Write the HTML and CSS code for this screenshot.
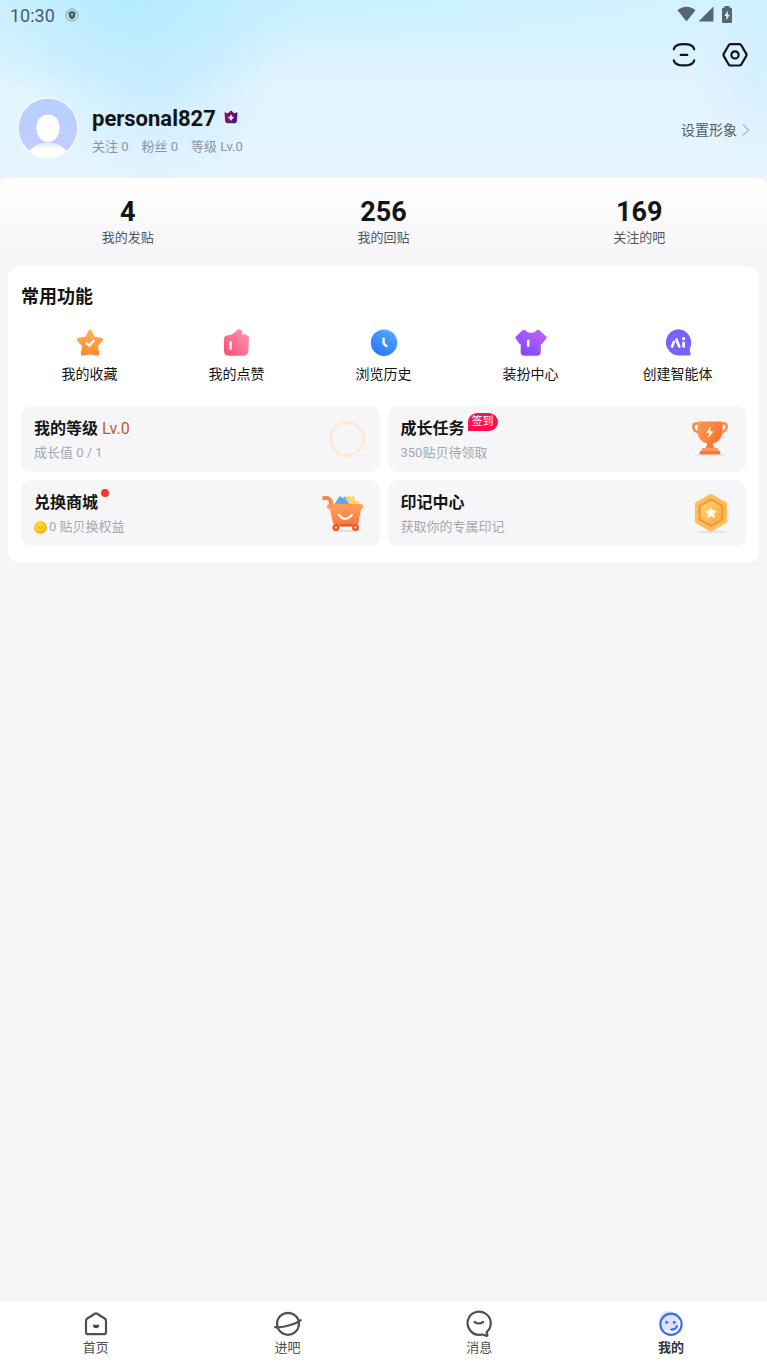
FILE: index.html
```html
<!DOCTYPE html>
<html lang="zh-CN">
<head>
  <meta charset="UTF-8" />
  <meta name="viewport" content="width=device-width, initial-scale=1.0" />
  <title>我的</title>
  <link rel="stylesheet" href="styles.css">
</head>
<body>
  <header class="hero">
    <div class="status-bar">
      <span class="clock">10:30</span>
      <svg width="14" height="14" viewBox="0 0 14 14">
        <circle cx="7" cy="7" r="6" fill="none" stroke="#8c9ea6" stroke-width="1" />
        <path d="M3.6 3.9 7 2.9l3.4 1v3C10.400 9 9 10.500 7 11.300 5 10.500 3.600 9 3.600 6.900z" fill="#4b5c63" />
        <path d="M5.500 5.500h3L7 8.500z" fill="#a9c4cd" />
      </svg>
      <div class="status-icons">
        <svg width="19" height="16" viewBox="0 0 19 16"><path d="M.5 4.300C5.500-.4 13.500-.4 18.500 4.300L9.500 15.500z" fill="#57666c" /></svg>
        <svg width="16" height="16" viewBox="0 0 16 16"><path d="M15.500.5v15H.5z" fill="#57666c" /></svg>
        <svg width="12" height="17" viewBox="0 0 12 17">
          <path d="M3.500 0h5v1.800H10q1 0 1 1V16q0 1-1 1H2q-1 0-1-1V2.800q0-1 1-1h1.500z" fill="#57666c" />
          <path d="M6.700 4.500 3.400 10h2v4.300L8.700 8.700h-2z" fill="#e2f4fd" />
        </svg>
      </div>
    </div>

    <div class="toolbar">
      <button class="icon-btn" aria-label="扫一扫">
        <svg width="28" height="28" viewBox="0 0 28 28" fill="none" stroke="#141414" stroke-width="2.200" stroke-linecap="round">
          <path d="M3.800 8.200C4.600 4.600 8 3.200 14 3.200s9.400 1.400 10.200 5M3.800 19.400c.8 3.600 4.200 5 10.200 5s9.400-1.400 10.200-5M10.700 13.900h6.600" />
        </svg>
      </button>
      <button class="icon-btn" aria-label="设置">
        <svg width="28" height="28" viewBox="0 0 28 28" fill="none" stroke="#141414" stroke-width="2.200" stroke-linejoin="round">
          <path d="M9.400 3.200h9.200q1.100 0 1.700 1l5 8.700q.6 1 0 2l-5 8.600q-.6 1-1.700 1H9.400q-1.100 0-1.700-1l-5-8.600q-.6-1 0-2l5-8.700q.6-1 1.700-1z" />
          <circle cx="14" cy="13.900" r="3.600" />
        </svg>
      </button>
    </div>

    <div class="profile">
      <svg class="avatar" width="62" height="62" viewBox="0 0 62 62">
        <defs>
          <linearGradient id="av" x1="0" y1="0" x2="0" y2="1"><stop offset="0" stop-color="#b6d1ff" /><stop offset="1" stop-color="#c5caff" /></linearGradient>
          <linearGradient id="bust" x1="0" y1="0" x2="0" y2="1"><stop offset="0" stop-color="#e2e7ff" /><stop offset=".4" stop-color="#fff" /></linearGradient>
          <clipPath id="avClip"><circle cx="31" cy="31" r="30" /></clipPath>
        </defs>
        <g clip-path="url(#avClip)">
          <circle cx="31" cy="31" r="30" fill="url(#av)" />
          <path d="M6 62C13 50 21 45.500 31 45.500S49 50 56 62z" fill="url(#bust)" />
          <path d="M31 17.500c7 0 11.500 5.500 11.500 13 0 8-4.500 14.500-11.500 14.500s-11.500-6.500-11.500-14.500c0-7.500 4.500-13 11.500-13z" fill="#fff" />
        </g>
        <circle cx="31" cy="31" r="30" fill="none" stroke="#f5faff" stroke-width="1.500" />
      </svg>
      <div class="profile-info">
        <h1 class="username">personal827
          <svg width="14" height="14" viewBox="0 0 14 14">
            <defs><linearGradient id="crown" x1="0" y1="0" x2="1" y2=".4"><stop offset="0" stop-color="#a3105e" /><stop offset=".5" stop-color="#7a1068" /><stop offset="1" stop-color="#3a12a5" /></linearGradient></defs>
            <path d="M.5 3q0-.8.800-.6L4 3.300 6.200 1Q7 .2 7.800 1L10 3.300l2.700-.9q.8-.2.800.6l-.7 8.200q-.2 2-2.200 2H3.400q-2 0-2.200-2z" fill="url(#crown)" />
            <path d="m7 4.300 1.200 2.200 2 1.200-2 1.200L7 11.100 5.800 8.900l-2-1.200 2-1.200z" fill="#fff0c0" />
          </svg>
        </h1>
        <div class="profile-meta"><span>关注 0</span><span>粉丝 0</span><span>等级 Lv.0</span></div>
      </div>
      <a class="avatar-link" href="#">设置形象
        <svg width="8" height="14" viewBox="0 0 8 14" fill="none" stroke="#b4bcc4" stroke-width="1.400"><path d="m1 1.500 5.500 5.500L1 12.500" /></svg>
      </a>
    </div>
  </header>

  <main>
    <section class="stats">
      <a class="stat" href="#"><b>4</b><span>我的发贴</span></a>
      <a class="stat" href="#"><b>256</b><span>我的回贴</span></a>
      <a class="stat" href="#"><b>169</b><span>关注的吧</span></a>
    </section>

    <section class="card">
      <h2 class="card-title">常用功能</h2>
      <div class="features">
        <a class="feature" href="#">
          <svg width="30" height="30" viewBox="0 0 30 30">
            <defs><linearGradient id="star" x1="0" y1="0" x2="0" y2="1"><stop offset="0" stop-color="#ffb054" /><stop offset="1" stop-color="#ff8a35" /></linearGradient></defs>
            <path d="m15 3.800 3.200 6.600 7.900 1.300-5.300 5.700 1.500 8.400L15 24.200l-7.300 1.600 1.500-8.400-5.300-5.700 7.900-1.300z" fill="url(#star)" stroke="url(#star)" stroke-width="4" stroke-linejoin="round" />
            <path d="m11.500 15.200 2.800 2.600 4.400-5" fill="none" stroke="#fff" stroke-width="2.200" stroke-linecap="round" stroke-linejoin="round" />
          </svg>
          <span>我的收藏</span>
        </a>
        <a class="feature" href="#">
          <svg width="30" height="30" viewBox="0 0 30 30">
            <defs><linearGradient id="like" x1="1" y1="0" x2="0" y2="1"><stop offset="0" stop-color="#ff9eae" /><stop offset="1" stop-color="#fb4a76" /></linearGradient></defs>
            <path d="M6 7.300c3.500-.2 5.500-1.500 8-4.300 2.800-3.200 6.600-1.500 6.300 2L20 6.500h2.500c3.500 0 4.700 1.900 4.500 4.700l-.6 11c-.3 3.700-2.100 5.500-5.500 5.500H7.500C4 27.700 2 26 2 22.500v-10c0-3.500 1-5 4-5.200z" fill="url(#like)" />
            <path d="M8.500 14.500v6" stroke="#fff" stroke-width="2.400" stroke-linecap="round" />
          </svg>
          <span>我的点赞</span>
        </a>
        <a class="feature" href="#">
          <svg width="30" height="30" viewBox="0 0 30 30">
            <defs><linearGradient id="hist" x1=".8" y1="0" x2=".3" y2="1"><stop offset="0" stop-color="#53a9ff" /><stop offset="1" stop-color="#2e76f5" /></linearGradient></defs>
            <circle cx="15" cy="14.700" r="13.200" fill="url(#hist)" />
            <path d="M14.600 10.600v4.800l2.800 2.700" fill="none" stroke="#fff" stroke-width="2.300" stroke-linecap="round" stroke-linejoin="round" />
          </svg>
          <span>浏览历史</span>
        </a>
        <a class="feature" href="#">
          <svg width="32" height="30" viewBox="0 0 32 30">
            <defs><linearGradient id="shirt" x1="1" y1="0" x2=".2" y2="1"><stop offset="0" stop-color="#c565ff" /><stop offset="1" stop-color="#7d49fb" /></linearGradient></defs>
            <path d="M7.200 2.400q1.800-1.300 3.300 0c3.200 3.100 7.800 3.100 11 0q1.500-1.300 3.300 0l6.300 6q1.100 1.200 0 2.400l-3.700 4.600q-.8 1-1.600.5v8.100q0 3.800-3.800 3.800H9.500q-3.800 0-3.800-3.800v-8.100q-.6.5-1.400-.5L.9 10.800q-1.100-1.200 0-2.400z" fill="url(#shirt)" />
            <path d="M13.200 12.800v5" stroke="#fff" stroke-width="2.400" stroke-linecap="round" />
          </svg>
          <span>装扮中心</span>
        </a>
        <a class="feature" href="#">
          <svg width="30" height="30" viewBox="0 0 30 30">
            <path d="M15 1.200a13.200 13.200 0 0 1 12.100 18.500c-.6 1.400-.6 2.500.4 5.500q.7 2.300-1.500 2.300H15A13.200 13.200 0 0 1 15 1.200z" fill="#7960ff" />
            <path d="M8.600 19.400 11.300 13M13 10.500l3.600 8.900M20.600 13.800v5.600" fill="none" stroke="#fff" stroke-width="2.600" />
            <circle cx="20.600" cy="10.600" r="1.600" fill="#fff" />
          </svg>
          <span>创建智能体</span>
        </a>
      </div>

      <div class="tiles">
        <a class="tile" href="#">
          <div>
            <h3>我的等级 <span class="level">Lv.0</span></h3>
            <p>成长值 0 / 1</p>
          </div>
          <svg width="40" height="44" viewBox="0 0 40 44"><circle cx="20" cy="22" r="16.500" fill="none" stroke="#fdeadb" stroke-width="3.500" /></svg>
        </a>
        <a class="tile" href="#">
          <div>
            <h3>成长任务<span class="badge">签到</span></h3>
            <p>350贴贝待领取</p>
          </div>
          <svg width="46" height="44" viewBox="0 0 46 44">
            <defs>
              <linearGradient id="cup" x1="0" y1="0" x2="1" y2=".5"><stop offset="0" stop-color="#ff9b5e" /><stop offset="1" stop-color="#fa742c" /></linearGradient>
            </defs>
            <ellipse cx="23" cy="38" rx="16" ry="1.500" fill="#e4e6ea" />
            <path d="M12 6.500H8.500C6.500 6.500 6 8.500 6.700 11.500c.7 2.500 2.800 3.600 6.300 3.600M34 6.500h3.500c2 0 2.500 2 1.800 5-.7 2.500-2.800 3.600-6.300 3.600" fill="none" stroke="#f9894c" stroke-width="2.600" />
            <path d="M20 23h6v5c0 2 1.500 3 4 4.500H16c2.500-1.500 4-2.500 4-4.500z" fill="#f9783a" />
            <path d="M10.500 6Q10.500 4.500 12 4.500h22q1.500 0 1.500 1.500v7.700C35.500 22 30 26.500 23 26.500S10.500 22 10.500 13.700z" fill="url(#cup)" />
            <rect x="14.500" y="31" width="17" height="4" rx="1.500" fill="#fc9a5b" />
            <rect x="12.500" y="34" width="21" height="3.600" rx="1.500" fill="#f47a3b" />
            <path d="m24 9.300-5 6.500h3.200l-1.200 5.500 5.800-7h-3.600z" fill="#fff6cf" />
          </svg>
        </a>
        <a class="tile" href="#">
          <div>
            <h3>兑换商城<span class="dot"></span></h3>
            <p>
              <svg width="13" height="13" viewBox="0 0 13 13">
                <circle cx="6.500" cy="6.500" r="6.300" fill="#ffad05" /><circle cx="6" cy="6" r="4.900" fill="#ffd42d" />
                <path d="M3.800 5.500Q6 9 8.500 5.500" fill="none" stroke="#f5a900" stroke-width="1.200" stroke-linecap="round" />
              </svg>
              0 贴贝换权益
            </p>
          </div>
          <svg width="46" height="44" viewBox="0 0 46 44">
            <defs><linearGradient id="cart" x1=".3" y1="0" x2=".6" y2="1"><stop offset="0" stop-color="#ffa057" /><stop offset="1" stop-color="#ff7438" /></linearGradient></defs>
            <ellipse cx="25" cy="39.800" rx="14" ry="1.300" fill="#dfe1e5" />
            <path d="m13.500 13 4.500-7q1-1.500 2.500 0l1.200 1.500 1.500-1.700q1.200-1 2 .5l3 6.700z" fill="#5ba9f8" />
            <path d="m24 7 3-2.500 3 2 3-1.500 1.200 5 4 .5-.5 3H29z" fill="#ffd75c" />
            <path d="M3 7h2.700q3 0 4 3.200l.5 4" fill="none" stroke="#f98949" stroke-width="4" stroke-linecap="round" />
            <path d="M8.500 16h32l-3 15.300q-.7 3-3.700 3H15.500q-3 0-3.700-3z" fill="url(#cart)" />
            <rect x="6" y="13" width="36" height="5" rx="2.500" fill="#ff9c5a" />
            <path d="M18.500 34.500h13" stroke="#df5420" stroke-width="2" />
            <path d="M18 24q6 7.500 13 0" fill="none" stroke="#fff" stroke-width="2.200" stroke-linecap="round" />
            <g fill="#fff" stroke="#e65d26" stroke-width="2.500"><circle cx="15" cy="36.500" r="2.300" /><circle cx="34.500" cy="36.500" r="2.300" /></g>
          </svg>
        </a>
        <a class="tile" href="#">
          <div>
            <h3>印记中心</h3>
            <p>获取你的专属印记</p>
          </div>
          <svg width="44" height="44" viewBox="0 0 44 44">
            <defs><linearGradient id="medal" x1="0" y1="0" x2="1" y2="1"><stop offset="0" stop-color="#ffd67b" /><stop offset="1" stop-color="#ffa344" /></linearGradient></defs>
            <ellipse cx="22" cy="40.800" rx="15" ry="1.500" fill="#e1e3e7" />
            <path d="m22 5 14 8v17.500l-14 8-14-8V13z" fill="#ffbd55" stroke="#ffbd55" stroke-width="4" stroke-linejoin="round" />
            <path d="m22 8.500 11.300 6.500v13.500L22 35l-11.300-6.500V15z" fill="url(#medal)" stroke="#ef963d" stroke-width="2" stroke-linejoin="round" />
            <path d="m22 16.500 1.500 3.300 3.700.5-2.700 2.600.7 3.600-3.200-1.800-3.200 1.800.7-3.600-2.700-2.600 3.700-.5z" fill="#fffbd8" stroke="#fffbd8" stroke-linejoin="round" />
          </svg>
        </a>
      </div>
    </section>
  </main>

  <nav class="tab-bar">
    <a class="tab" href="#">
      <svg width="28" height="28" viewBox="0 0 28 28">
        <path d="M5.300 8.500 12.800 3.700q1.200-.7 2.400 0l7.500 4.800q1.300.9 1.300 2.400v11.300q0 2-2 2H6q-2 0-2-2V10.900q0-1.500 1.300-2.400z" fill="none" stroke="#505050" stroke-width="2.200" />
        <path d="M10.800 14.700h6.600c0 4.800-6.600 4.800-6.600 0z" fill="#3d4672" />
      </svg>
      <span>首页</span>
    </a>
    <a class="tab" href="#">
      <svg width="28" height="28" viewBox="0 0 28 28" fill="none" stroke="#505050" stroke-width="2.200">
        <circle cx="14" cy="13.800" r="11" />
        <path d="M1.200 17.200c5 1 20-2.500 25.500-7" stroke-linecap="round" />
      </svg>
      <span>进吧</span>
    </a>
    <a class="tab" href="#">
      <svg width="28" height="28" viewBox="0 0 28 28" fill="none" stroke="#505050" stroke-width="2.200" stroke-linecap="round" stroke-linejoin="round">
        <path d="M21.600 22.100A11.600 11.600 0 1 0 14 24.800c2.500 0 3.500-.4 4.500 0l2.600.9q1.600.4 1.200-1.200z" />
        <path d="M9.500 12q4.500 3 8.500 0" />
      </svg>
      <span>消息</span>
    </a>
    <a class="tab active" href="#">
      <svg width="28" height="28" viewBox="0 0 28 28">
        <circle cx="11.500" cy="11" r="10" fill="#dce3ff" />
        <circle cx="14" cy="14.200" r="10.600" fill="none" stroke="#3f6df6" stroke-width="2.200" />
        <circle cx="9.700" cy="12.200" r="1.500" fill="#3f6df6" /><circle cx="17.200" cy="12.200" r="1.500" fill="#3f6df6" />
        <path d="M14.300 19.600q4.500 0 5.600-3.500" fill="none" stroke="#3f6df6" stroke-width="2.200" stroke-linecap="round" />
      </svg>
      <span>我的</span>
    </a>
  </nav>
</body>
</html>
```
FILE: styles.css
```css
* {
  box-sizing: border-box;
}
body {
  font-family: Roboto, "Noto Sans CJK SC", sans-serif;
  margin: 0;
  min-height: 100vh;
  display: flex;
  flex-direction: column;
  background: #f6f6f9;
  color: #141414;
}
a {
  color: inherit;
  text-decoration: none;
}
h1, h2, h3, p {
  margin: 0;
}
svg {
  display: block;
  flex: none;
}
main {
  flex: 1;
}

/* header */
.hero {
  padding-bottom: 19px;
  background:
    radial-gradient(ellipse 190px 110px at 17% 0, #b5ebff, transparent),
    radial-gradient(ellipse 320px 50px at 45% 0, #c8f1ff, transparent),
    radial-gradient(ellipse 60px 120px at 100% 0, #cdf2ff, transparent),
    radial-gradient(ellipse 120px 110px at 20% 80px, #cbecff, transparent),
    radial-gradient(ellipse 60px 90px at 98% 80px, #dbefff, transparent),
    linear-gradient(#d3f2ff, #dcf2ff 35%, #e2f5ff 50%, #e5f5ff);
}
.status-bar {
  display: flex;
  align-items: center;
  gap: 10px;
  height: 30px;
  padding: 0 34px 0 10px;
}
.clock {
  padding-top: 2px;
  font-size: 18px;
  line-height: 30px;
  color: #4b5c63;
}
.status-icons {
  display: flex;
  gap: 2px;
  margin-left: auto;
  padding-bottom: 2px;
}
.status-icons svg:last-child {
  margin-left: 5px;
}
.toolbar {
  display: flex;
  justify-content: flex-end;
  gap: 23px;
  padding: 11px 18px 0;
}
.icon-btn {
  border: 0;
  padding: 0;
  background: none;
  cursor: pointer;
}
.profile {
  display: flex;
  align-items: center;
  padding: 28px 17px 0;
}
.profile-info {
  padding-top: 4px;
  margin-left: 13px;
}
.username {
  display: flex;
  align-items: center;
  gap: 8px;
  font-size: 22px;
  line-height: 30px;
  font-weight: 700;
}
.username svg {
  margin-bottom: 3px;
}
.profile-meta {
  display: flex;
  gap: 13px;
  margin-top: 3px;
  font-size: 13px;
  line-height: 20px;
  color: #8d949b;
}
.avatar-link {
  display: flex;
  align-items: center;
  gap: 5px;
  margin-left: auto;
  padding-top: 4px;
  font-size: 14px;
  line-height: 20px;
  color: #555a60;
}

/* counters */
.stats {
  display: grid;
  grid-template-columns: repeat(3, 1fr);
  padding: 18px 0;
  border-radius: 10px 10px 0 0;
  background: linear-gradient(#fff, #f6f6f9 85%);
}
.stat {
  text-align: center;
}
.stat b {
  display: block;
  font-size: 27px;
  line-height: 32px;
}
.stat span {
  display: block;
  font-size: 13px;
  line-height: 20px;
  color: #555;
}

/* common functions */
.card {
  margin: 0 8px;
  padding: 18px 13px 17px;
  border-radius: 12px;
  background: #fff;
}
.card-title {
  font-size: 18px;
  line-height: 26px;
  font-weight: 700;
}
.features {
  display: grid;
  grid-template-columns: repeat(5, 1fr);
  margin: 18px -5px 21px;
}
.feature {
  display: flex;
  flex-direction: column;
  align-items: center;
  gap: 5px;
  font-size: 14px;
  line-height: 22px;
}
.tiles {
  display: grid;
  grid-template-columns: 1fr 1fr;
  gap: 8px;
}
.tile {
  display: flex;
  align-items: center;
  justify-content: space-between;
  height: 66px;
  padding: 0 13px;
  border-radius: 10px;
  background: #f6f6f9;
}
.tile h3 {
  position: relative;
  width: max-content;
  padding-top: 2px;
  font-size: 16px;
  line-height: 24px;
  font-weight: 700;
}
.tile p {
  display: flex;
  align-items: center;
  gap: 2px;
  margin-top: 2px;
  font-size: 13px;
  line-height: 20px;
  color: #a5a8ad;
}
.level {
  font-weight: 400;
  color: #c05a2c;
}
.badge {
  position: absolute;
  left: 100%;
  top: -2px;
  margin-left: 3px;
  padding: 0 4px;
  border-radius: 9px 9px 9px 0;
  background: #ff0f50;
  color: #fff;
  font-size: 11px;
  line-height: 18px;
  font-weight: 400;
  white-space: nowrap;
}
.dot {
  position: absolute;
  left: 100%;
  top: 0;
  margin-left: 3px;
  width: 8px;
  height: 8px;
  border-radius: 50%;
  background: #ff332e;
}

/* bottom tabs */
.tab-bar {
  position: sticky;
  bottom: 0;
  display: grid;
  grid-template-columns: repeat(4, 1fr);
  padding: 8px 0 7px;
  background: #fff;
}
.tab {
  display: flex;
  flex-direction: column;
  align-items: center;
  gap: 1px;
  font-size: 13px;
  line-height: 18px;
  color: #505050;
}
.tab.active {
  font-weight: 700;
  color: #333;
}
```
